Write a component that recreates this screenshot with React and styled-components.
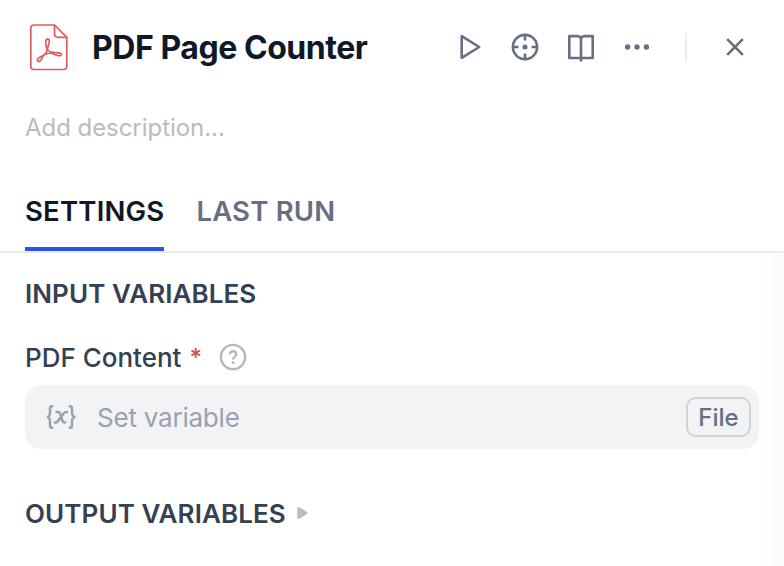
import React from "react";
import styled, { createGlobalStyle } from "styled-components";

const GlobalStyle = createGlobalStyle`
  * { box-sizing: border-box; }
  body { margin: 0; background: #fff; font-family: Inter, "Liberation Sans", sans-serif; overflow: hidden; }
`;

const Panel = styled.main`
  width: 784px;
  height: 566px;
  display: flex;
  flex-direction: column;
  background: #fff;
`;

const Header = styled.header`
  height: 94px;
  flex: none;
  display: flex;
  align-items: center;
  padding-left: 25px;
`;

const Icon = styled.svg`
  display: block;
  flex: none;
  fill: none;
  overflow: visible;
`;

const Title = styled.h1`
  margin: 0 0 0 19px;
  padding-top: 2px;
  width: 349px;
  font-size: 32px;
  line-height: 40px;
  font-weight: 650;
  letter-spacing: -0.45px;
  color: #101828;
  white-space: nowrap;
`;

const Action = styled.button`
  width: 56px;
  height: 48px;
  padding: 0;
  border: 0;
  background: none;
  color: #676f83;
  display: flex;
  align-items: center;
  justify-content: center;
`;

const Divider = styled.span`
  width: 2px;
  height: 28px;
  margin: 0 20px;
  background: #ebecee;
`;

const Description = styled.p`
  margin: 17px 0 0 25px;
  font-size: 24px;
  line-height: 34px;
  letter-spacing: -0.05px;
  color: #b9bbc1;
`;

const Tabs = styled.nav`
  height: 108px;
  flex: none;
  display: flex;
  gap: 32px;
  padding: 42px 25px 0;
  border-bottom: 2px solid #ebecee;
`;

const Tab = styled.button`
  height: 64px;
  padding: 6px 0 18px;
  border: 0;
  border-bottom: 4px solid ${(p) => (p.$active ? "#2857e5" : "transparent")};
  background: none;
  font: 600 27.5px/36px Inter, sans-serif;
  letter-spacing: 0.2px;
  color: ${(p) => (p.$active ? "#101828" : "#676f83")};
  white-space: nowrap;
`;

const Content = styled.section`
  flex: 1;
  padding: 23px 25px 0;
  background: linear-gradient(to right, #fff 756px, #fefefe 764px, #fbfbfb 784px);
`;

const SectionTitle = styled.h2`
  display: flex;
  align-items: center;
  margin: 0;
  font-size: 26px;
  line-height: 36px;
  font-weight: 600;
  letter-spacing: 0.09px;
  color: #354052;
`;

const Label = styled.div`
  display: flex;
  align-items: center;
  height: 36px;
  margin-top: 27px;
  font-size: 26px;
  font-weight: 500;
  color: #354052;
`;

const Required = styled.span`
  margin: 0 17px 0 8px;
  font-size: 24px;
  color: #e04a3f;
`;

const Field = styled.div`
  height: 64px;
  width: 734px;
  margin: 10px 0 47px;
  padding: 0 8px 0 20px;
  border-radius: 16px;
  background: #f1f3f5;
  display: flex;
  align-items: center;
`;

const Placeholder = styled.span`
  flex: 1;
  margin-left: 20px;
  font-size: 26px;
  letter-spacing: -0.22px;
  color: #98a2b3;
`;

const TypeBadge = styled.span`
  width: 65px;
  height: 40px;
  border: 2px solid #d0d2d6;
  border-radius: 10px;
  display: flex;
  align-items: center;
  justify-content: center;
  font-size: 24px;
  font-weight: 500;
  color: #676f83;
`;

const PdfIcon = () => (
  <Icon width="48" height="48" viewBox="25 23 48 48" stroke="#dc5c5b" strokeWidth="1.7" strokeLinejoin="round">
    <path d="M34 25H54.5L66.8 37.3V66Q66.8 69.5 63.3 69.5H34Q30.8 69.5 30.8 66V28.5Q30.8 25 34 25Z" />
    <path d="M54.5 25V33.8Q54.5 37.3 58 37.3H66.8" />
    <path d="M47.1 50C47.1 47.5 45.7 45.8 45.7 42.7C45.7 37.7 49.6 37.7 49.3 41.8C49.1 44.8 47.5 46.5 47.5 49.5C48.8 52.2 51.3 52.2 54.6 52.5C58.2 52.8 61.6 52.7 61.5 54.4C61.3 56.6 57.5 55.8 54.8 54.5C51.5 52.8 48.2 53 45.2 54.3C42.1 55.7 42.8 57.2 40.8 60.2C39.3 62.3 36.6 61.5 37.5 59.5C38.7 56.7 42.5 56.8 44.7 54.4C45.9 53.2 47.1 51.8 47.1 50Z" />
  </Icon>
);

const actions = [
  { label: "Run", art: <path d="M10.7 7.2V28.8L28.2 18Z" strokeLinejoin="round" /> },
  {
    label: "Locate",
    art: <><circle cx="18" cy="18" r="12.1" /><path d="M18 6V11.5M18 24.5V30M6 18H11.5M24.5 18H30" /><circle cx="18" cy="18" r="2.5" fill="currentColor" stroke="none" /></>,
  },
  {
    label: "Docs",
    art: <><path d="M18 9Q16.8 7.1 14.5 7.1H6.3V29H29.7V7.1H21.5Q19.2 7.1 18 9Z" strokeLinejoin="round" /><path d="M18 9V32.5" /></>,
  },
  { label: "More", art: <g fill="currentColor" stroke="none"><circle cx="8.6" cy="18" r="2.7" /><circle cx="18" cy="18" r="2.7" /><circle cx="27.4" cy="18" r="2.7" /></g> },
];

const ActionButton = ({ label, children }) => (
  <Action aria-label={label}>
    <Icon width="36" height="36" viewBox="0 0 36 36" stroke="currentColor" strokeWidth="2.6">{children}</Icon>
  </Action>
);

const HelpIcon = () => (
  <Icon width="28" height="28" viewBox="0 0 28 28" stroke="#b5b7bd" strokeWidth="2.4">
    <circle cx="14" cy="14" r="12.1" />
    <path d="M10.8 11.6C10.8 7 17.3 7.3 17.3 11.4C17.3 14 14 13.8 14 16.5" />
    <circle cx="14" cy="19.6" r="1.5" fill="#b5b7bd" stroke="none" />
  </Icon>
);

const VariableIcon = () => (
  <Icon width="32" height="28" viewBox="45 403 32 28" stroke="#98a2b3" strokeWidth="2.5" strokeLinecap="round" strokeLinejoin="round">
    <path d="M52.2 406.2H52Q50 406.2 50 408.5V413.5Q50 415.5 47.8 417Q50 418.5 50 420.5V425.5Q50 427.8 52 427.8H52.2M69.8 406.2H70Q72 406.2 72 408.5V413.5Q72 415.5 74.4 417Q72 418.5 72 420.5V425.5Q72 427.8 70 427.8H69.8" />
    <path d="M56.5 412H58Q59.5 412 60 413.5L62.5 421Q63 422.6 65.2 422.6M67 412H66Q64.8 412 63.8 413.2L57.7 421.3Q56.8 422.6 55 422.6" />
  </Icon>
);

export default function App() {
  return (
    <Panel>
      <GlobalStyle />
      <Header>
        <PdfIcon />
        <Title>PDF Page Counter</Title>
        {actions.map((a) => <ActionButton key={a.label} label={a.label}>{a.art}</ActionButton>)}
        <Divider />
        <ActionButton label="Close"><path d="M10.2 10.2L25.8 25.8M25.8 10.2L10.2 25.8" /></ActionButton>
      </Header>
      <Description>Add description...</Description>
      <Tabs>
        <Tab $active>SETTINGS</Tab>
        <Tab>LAST RUN</Tab>
      </Tabs>
      <Content>
        <SectionTitle>INPUT VARIABLES</SectionTitle>
        <Label>PDF Content <Required>*</Required><HelpIcon /></Label>
        <Field>
          <VariableIcon />
          <Placeholder>Set variable</Placeholder>
          <TypeBadge>File</TypeBadge>
        </Field>
        <SectionTitle>
          OUTPUT VARIABLES
          <Icon width="34" height="20" viewBox="0 0 34 20"><path d="M11.3 4.5V13Q11.3 15.8 13.6 14.5L20.3 10.5Q22.3 9 20.3 7.5L13.6 3.5Q11.3 2.2 11.3 4.5Z" fill="#b9bbc1" /></Icon>
        </SectionTitle>
      </Content>
    </Panel>
  );
}
